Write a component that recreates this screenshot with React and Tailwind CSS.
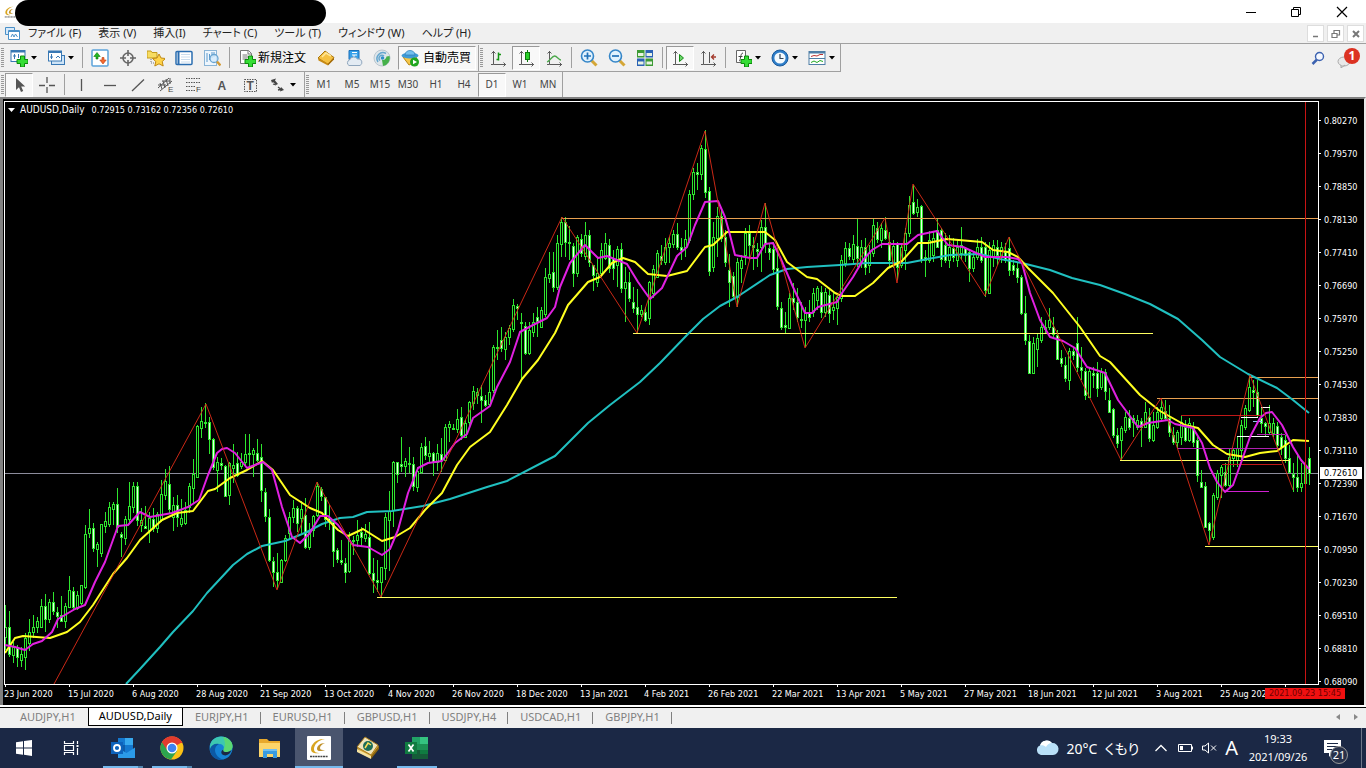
import clsx from 'clsx'

// bars are [high, open, close, low] on the vertical scale of the plot, one every 4 units
const BARS = [
  [605,637,627,650],[611,627,654,657],[642,655,647,663],[645,648,657,667],[647,660,654,667],[633,657,638,670],[619,643,632,651],[615,632,627,638],
  [617,627,621,633],[599,627,606,628],[594,606,619,632],[599,619,602,623],[592,602,611,615],[607,612,616,628],[596,615,621,622],[603,621,606,628],
  [576,607,590,607],[587,591,607,610],[591,608,595,610],[585,603,585,605],[525,587,534,589],[509,533,528,538],[523,528,548,552],[542,549,544,567],
  [524,553,524,557],[512,526,521,533],[502,524,507,527],[502,509,504,525],[488,504,527,533],[532,534,537,557],[516,538,519,545],[482,519,506,523],
  [482,507,486,513],[482,486,520,526],[508,525,520,532],[506,526,528,529],[512,530,518,543],[508,519,528,532],[512,528,514,533],[480,520,494,522],
  [469,495,481,500],[466,484,509,514],[497,517,505,531],[495,505,517,527],[499,524,518,527],[502,523,510,525],[483,507,486,513],[459,488,474,503],
  [425,477,426,477],[407,428,421,438],[403,422,423,428],[417,422,439,454],[438,439,467,470],[457,470,462,492],[458,463,465,470],[465,466,496,497],
  [462,495,463,505],[444,468,465,483],[452,463,475,477],[453,466,462,469],[434,462,454,467],[434,453,454,467],[448,454,450,477],[439,453,460,462],
  [444,457,490,502],[488,492,516,522],[509,517,560,562],[557,561,572,587],[553,572,580,589],[559,582,560,583],[535,560,538,562],[512,533,517,540],
  [500,517,508,523],[506,508,523,532],[501,518,509,533],[498,515,547,549],[523,547,532,550],[515,530,516,537],[482,515,486,517],[487,489,496,501],
  [497,497,519,527],[505,518,522,530],[520,522,551,567],[548,550,559,563],[540,560,562,565],[558,563,572,583],[532,571,540,573],[536,540,541,555],
  [520,540,535,547],[527,532,537,547],[524,538,534,542],[522,537,573,575],[558,573,580,593],[560,580,582,592],[567,582,567,597],[513,568,517,580],
  [491,520,511,571],[461,510,462,527],[462,462,474,483],[437,464,466,472],[458,466,461,477],[447,463,464,473],[457,464,486,491],[467,487,471,492],
  [443,472,447,474],[437,446,455,460],[441,456,453,463],[452,453,462,476],[444,462,453,471],[438,454,460,472],[424,460,427,461],[421,427,424,442],
  [424,428,429,430],[409,429,419,433],[407,417,435,440],[420,437,423,438],[401,422,402,428],[386,403,391,410],[388,395,392,404],[385,396,400,423],
  [395,400,405,407],[369,404,392,407],[345,390,347,393],[330,347,348,360],[327,340,348,352],[332,349,337,360],[325,337,328,345],[299,329,305,332],
  [304,306,308,320],[313,322,323,379],[322,326,353,355],[322,353,330,355],[313,332,322,337],[307,317,321,337],[307,327,310,328],[268,314,277,317],
  [252,278,274,283],[252,272,287,292],[235,287,243,290],[217,244,222,257],[217,222,242,257],[226,242,243,260],[243,246,273,287],[235,273,237,277],
  [234,239,253,257],[222,256,235,260],[230,235,262,267],[265,265,275,291],[257,282,273,287],[243,273,250,275],[233,258,243,260],[239,245,268,273],
  [250,258,268,280],[246,265,249,287],[243,249,288,293],[267,288,282,322],[272,282,298,302],[287,302,308,313],[289,307,314,333],[305,314,310,317],
  [307,312,320,322],[281,318,282,325],[265,293,269,298],[250,277,253,278],[245,256,260,265],[238,262,247,265],[237,247,243,263],[230,244,234,248],
  [223,234,247,250],[238,247,250,260],[230,247,239,257],[190,240,194,243],[168,194,172,200],[163,172,174,190],[145,174,148,180],[130,149,192,198],
  [187,191,271,276],[222,267,237,272],[207,238,216,257],[208,216,238,242],[230,237,262,267],[254,270,282,307],[272,276,296,300],[258,297,262,307],
  [255,268,260,283],[228,255,233,265],[225,233,245,260],[237,245,247,270],[243,249,251,267],[220,247,227,272],[203,227,243,253],[244,248,252,260],
  [242,249,269,275],[248,268,306,310],[302,308,327,330],[312,325,327,334],[293,328,298,329],[283,298,302,310],[288,302,317,322],[302,319,320,328],
  [307,320,313,347],[300,313,317,322],[288,312,293,317],[286,300,288,310],[286,292,312,318],[288,312,292,317],[290,295,313,323],[293,310,307,320],
  [293,308,297,325],[255,298,260,302],[242,263,248,267],[243,248,256,260],[235,259,244,263],[218,246,258,267],[240,263,247,268],[238,247,267,275],
  [245,265,253,273],[219,253,225,257],[222,228,239,243],[223,240,228,248],[217,230,238,240],[232,242,260,267],[240,263,246,268],[242,244,267,280],
  [245,265,247,268],[228,250,233,270],[196,233,205,237],[185,202,213,215],[199,212,207,217],[205,206,260,263],[250,257,260,277],[231,260,240,263],
  [232,255,238,262],[218,230,247,248],[228,230,259,267],[233,245,260,263],[235,260,247,268],[238,248,257,262],[240,260,247,267],[227,253,245,260],
  [247,248,255,262],[250,252,268,282],[252,268,257,272],[239,257,247,260],[237,247,260,263],[242,247,290,297],[242,293,250,294],[240,257,245,267],
  [240,247,255,265],[242,257,247,263],[243,252,260,263],[237,248,270,276],[260,265,270,275],[262,268,277,283],[275,277,313,315],[296,313,340,345],
  [335,341,373,374],[337,373,343,374],[333,349,338,367],[317,340,327,343],[320,327,329,333],[308,327,320,330],[317,327,334,337],[330,335,359,360],
  [350,358,363,367],[357,365,378,382],[348,380,351,390],[347,351,355,360],[317,343,367,372],[347,367,370,380],[368,371,395,400],[367,397,371,398],
  [367,373,375,388],[362,373,388,397],[368,387,372,390],[369,372,391,400],[388,400,412,413],[408,409,435,438],[428,435,443,448],[426,440,428,460],
  [412,430,417,433],[410,418,427,430],[415,418,422,437],[415,427,420,430],[418,421,427,447],[402,427,412,428],[408,417,438,442],[412,440,425,442],
  [407,427,412,429],[398,418,407,422],[400,411,418,420],[405,418,432,437],[427,435,442,445],[430,442,432,448],[415,437,422,445],[420,427,440,442],
  [418,440,423,442],[422,428,442,447],[437,440,475,482],[470,482,487,488],[482,486,527,528],[522,523,530,542],[493,537,495,540],[470,497,473,500],
  [465,475,467,498],[463,472,485,487],[448,485,457,487],[448,458,450,467],[437,460,448,467],[420,450,425,462],[405,427,408,430],[374,410,387,412],
  [380,390,392,407],[380,392,415,417],[407,418,423,433],[422,423,426,437],[405,432,423,435],[418,433,423,437],[422,426,445,450],[433,437,447,455],
  [435,440,458,463],[445,458,472,473],[463,474,477,492],[455,477,487,492],[463,487,483,492],[455,483,465,484],[447,458,473,485],
]

const FAST = '5,645 15,647 25,650 33,644 42,641 52,632 58,619 75,609 85,605 95,582 105,562 118,526 128,525 140,512 150,517 172,513 188,507 199,500 208,475 217,453 222,449 227,448 235,453 247,468 263,462 272,470 282,507 292,537 300,543 310,533 320,516 328,516 338,525 353,545 368,547 382,555 390,549 398,530 408,493 418,468 428,463 442,461 455,443 467,434 473,418 490,406 497,387 510,362 520,332 533,325 547,318 555,307 560,287 570,263 585,245 598,258 607,256 627,264 638,282 650,299 662,288 677,256 687,247 695,225 705,202 718,201 725,217 730,235 735,255 750,258 757,258 765,244 773,243 780,257 793,287 805,313 812,313 818,307 837,302 842,293 853,277 863,260 872,250 882,244 907,244 918,235 937,231 948,245 963,247 985,257 1007,257 1018,259 1022,263 1030,293 1040,320 1050,337 1063,341 1075,348 1087,367 1105,373 1118,400 1138,427 1148,423 1168,420 1175,424 1193,428 1202,443 1210,468 1217,482 1225,492 1233,485 1242,460 1250,437 1260,418 1266,413 1272,412 1282,425 1293,447 1301,460 1309,469'
const MID = '5,653 15,638 23,636 50,638 67,632 80,622 93,605 113,574 127,558 140,540 162,520 177,513 193,511 208,491 215,489 230,478 247,470 262,461 273,470 290,495 310,508 322,513 328,520 338,530 348,536 363,529 382,541 395,537 410,528 425,510 442,493 457,465 470,447 490,432 507,405 522,379 538,360 555,333 568,305 588,282 600,277 612,263 623,258 635,262 648,274 667,276 687,271 705,247 713,245 727,232 765,232 775,240 787,262 807,277 817,279 835,293 842,296 855,296 873,283 888,268 902,261 918,243 928,243 947,239 982,242 993,250 1008,252 1018,257 1028,268 1053,293 1080,327 1100,356 1110,362 1140,395 1160,411 1185,425 1198,428 1213,445 1227,454 1245,457 1260,453 1277,451 1293,440 1309,441'
const SLOW = '126,684 140,669 160,647 173,632 193,611 207,593 233,565 247,554 262,546 285,541 307,532 322,524 340,518 353,517 367,512 392,511 423,506 450,499 487,487 507,481 555,456 588,423 610,405 640,382 660,363 687,335 703,319 720,306 737,297 770,275 787,269 807,267 840,265 867,263 907,263 933,258 950,255 980,254 1000,259 1022,263 1050,270 1072,278 1100,285 1125,294 1150,304 1178,319 1202,340 1220,357 1248,374 1277,388 1293,400 1309,413'
const ZIGZAG = '54,684 206,404 277,590 317,482 381,597 562,217 637,333 705,131 737,307 765,203 805,348 885,218 897,283 913,184 985,296 1009,237 1121,460 1161,398 1209,545 1250,375 1293,490'

const LEVELS = [
  { y: 218, from: 562, to: 1318, color: '#e8a050' },
  { y: 333, from: 633, to: 1153, color: '#ffff60' },
  { y: 597, from: 377, to: 897, color: '#ffff60' },
  { y: 377, from: 1249, to: 1318, color: '#e8a050' },
  { y: 398, from: 1157, to: 1318, color: '#e8a050' },
  { y: 415, from: 1181, to: 1261, color: '#c01818' },
  { y: 407, from: 1261, to: 1270, color: '#ffffff' },
  { y: 417, from: 1241, to: 1258, color: '#ffffff' },
  { y: 421, from: 1253, to: 1262, color: '#8cc8f0' },
  { y: 436, from: 1237, to: 1269, color: '#ffffff' },
  { y: 434, from: 1257, to: 1285, color: '#b020b0' },
  { y: 448, from: 1177, to: 1280, color: '#b020b0' },
  { y: 460, from: 1120, to: 1290, color: '#ffff60' },
  { y: 464, from: 1222, to: 1282, color: '#c01818' },
  { y: 491, from: 1225, to: 1269, color: '#d020d0' },
  { y: 546, from: 1205, to: 1318, color: '#ffff60' },
]

const PRICES = ['0.80270', '0.79570', '0.78850', '0.78130', '0.77410', '0.76690', '0.75970', '0.75250', '0.74530', '0.73830', '0.73110', '0.72390', '0.71670', '0.70950', '0.70230', '0.69510', '0.68810', '0.68090']
const DATES = ['23 Jun 2020', '15 Jul 2020', '6 Aug 2020', '28 Aug 2020', '21 Sep 2020', '13 Oct 2020', '4 Nov 2020', '26 Nov 2020', '18 Dec 2020', '13 Jan 2021', '4 Feb 2021', '26 Feb 2021', '22 Mar 2021', '13 Apr 2021', '5 May 2021', '27 May 2021', '18 Jun 2021', '12 Jul 2021', '3 Aug 2021', '25 Aug 2021', '']
const MENUS = ['ファイル (F)', '表示 (V)', '挿入(I)', 'チャート (C)', 'ツール (T)', 'ウィンドウ (W)', 'ヘルプ (H)']
const FRAMES = ['M1', 'M5', 'M15', 'M30', 'H1', 'H4', 'D1', 'W1', 'MN']
const TABS = ['AUDJPY,H1', 'AUDUSD,Daily', 'EURJPY,H1', 'EURUSD,H1', 'GBPUSD,H1', 'USDJPY,H4', 'USDCAD,H1', 'GBPJPY,H1']

const plus = <path d="M10.500 7h4v3.500H18v4h-3.500V18h-4v-3.500H7v-4h3.500z" fill="#35dd35" stroke="#0c8a0c" />
const axes = <path d="M4.500 2v13.500H17M2.500 4.500l2-2 2 2M14.500 13.500l2 2-2 2M4.500 15.500H2" fill="none" stroke="#5a5a5a" />

const ICONS = {
  newChart: <><rect x="1" y="1.500" width="14" height="11" fill="#fff" stroke="#3878b4" /><path d="M1 2.500h14" stroke="#3878b4" strokeWidth="2" /><path d="M4.500 5v5M3 7h3M8.500 5v4" stroke="#3878b4" />{plus}</>,
  profiles: <><rect x="4.500" y="6.500" width="13" height="9" fill="#cfe4f7" stroke="#3878b4" /><rect x="1.500" y="2" width="13" height="10" fill="#fff" stroke="#3878b4" /><path d="M1.500 3h13" stroke="#3878b4" strokeWidth="2" /><path d="M4.500 5v5M3 8h3M9 9l2-2 2 2" fill="none" stroke="#3878b4" /></>,
  market: <><rect x="1" y="1" width="16" height="16" rx="1" fill="#fff" stroke="#5ba3da" strokeWidth="1.500" /><path d="M6 3.500L2.800 7.500H5V10h2V7.500h2.200z" fill="#22b822" stroke="#0c7a0c" strokeWidth=".6" /><path d="M12 15l-3.200-4H11V8.500h2V11h2.200z" fill="#f56a30" stroke="#b83c10" strokeWidth=".6" /></>,
  target: <g fill="none" stroke="#666" strokeWidth="1.600"><circle cx="9" cy="9" r="5" /><path d="M9 1v6M9 11v6M1 9h6M11 9h6" /></g>,
  navigator: <><path d="M0 2h4l1 1.500h5V9H0z" fill="#f7dc61" stroke="#c39a1d" /><path d="M4 10v4h5" stroke="#777" strokeDasharray="1 1" fill="none" /><path d="M12 5l2 4 4.500.5-3.300 3 1 4.500-4.200-2.200L7.800 17l1-4.500-3.300-3L10 9z" fill="#ffd44a" stroke="#c18a13" /></>,
  terminal: <><rect x="1" y="2.500" width="16" height="13" rx="1" fill="#fff" stroke="#2a6db0" strokeWidth="1.500" /><path d="M3.500 3v12" stroke="#2a6db0" strokeWidth="2" /><path d="M6 5.500h9M6 8h9M6 10.500h9M6 13h9" stroke="#c9dcee" /></>,
  tester: <><rect x="1.500" y="1.500" width="12" height="15" fill="#eef6fd" stroke="#8ab4d6" /><path d="M4 4v9M6.500 5v6M9 3v6M11 3v5" stroke="#5c9acc" /><circle cx="11" cy="9.500" r="4" fill="#d4ebfb" fillOpacity=".8" stroke="#6aa5d2" strokeWidth="1.300" /><path d="M14 12.500l3.500 4" stroke="#d39a35" strokeWidth="2.500" /></>,
  order: <><path d="M2.500 1.500h8l3 3v10h-11z" fill="#fff" stroke="#777" /><path d="M10 1.500V5h3.500" fill="none" stroke="#777" /><path d="M4.500 6h5M4.500 8h7M4.500 10h5" stroke="#777" />{plus}</>,
  gold: <><path d="M1 9l7-7 9 6.500-6 7z" fill="#f5c142" stroke="#a8740c" /><path d="M1 9l10 5.500v2L1.500 11.500z" fill="#c88a14" /><path d="M11 14.500l6-6v2L11 16.500z" fill="#a56b08" /><path d="M5 8l4-4 5 3" stroke="#ffe79a" strokeWidth="1.500" fill="none" /></>,
  server: <><path d="M4 1.500h10v9H4z" fill="#36a0ea" stroke="#1a6fb8" /><path d="M7 3.500h5M7 6h5M9 6v4" stroke="#fff" /><path d="M4 16.500a3 3 0 01.5-5.500 4.500 4.500 0 018-1 3.500 3.500 0 012.500 6.500z" fill="#e3ebf3" stroke="#8fa6bd" /></>,
  signal: <><circle cx="9" cy="9" r="8" fill="#dfe6ea" stroke="#b9c6cf" /><path d="M5 13a6 6 0 018-8.500M7 11.500a3 3 0 014-4.500" fill="none" stroke="#65a7cf" strokeWidth="1.500" /><path d="M9 11l1 6A8 8 0 0016.500 7l-3 .5A4 4 0 019 11z" fill="#46b14a" /><circle cx="9.500" cy="9" r="1.800" fill="#2f8ec9" /></>,
  auto: <><path d="M2 8l6 8 8-4-1-5z" fill="#f5c649" stroke="#b68714" /><ellipse cx="9" cy="6.500" rx="8.500" ry="3" fill="#3f9ad6" /><path d="M4 6c0-6 10-6 10 0z" fill="#74bfee" stroke="#2a7db8" strokeWidth=".7" /><circle cx="13.500" cy="13" r="4.500" fill="#1fa61f" /><path d="M12 10.700l4 2.300-4 2.300z" fill="#fff" /></>,
  bars: <>{axes}<path d="M9.500 3.500v8M7.500 10.500h2M9.500 5.500h2.500" stroke="#159415" strokeWidth="1.500" fill="none" /></>,
  candle: <>{axes}<path d="M10.500 1v12" stroke="#0b7a0b" /><rect x="8.500" y="3.500" width="4" height="7" fill="#29d029" stroke="#0b7a0b" /></>,
  line: <>{axes}<path d="M2 13c3-1 5-6 7.500-6S14 11 16 11" stroke="#4ca84c" strokeWidth="1.300" fill="none" /></>,
  zoomIn: <><path d="M11 11l5.500 5.500" stroke="#d4a636" strokeWidth="3" /><circle cx="7.500" cy="7" r="6" fill="#e1f2fd" stroke="#3586c8" strokeWidth="1.600" /><path d="M4 7h7M7.500 3.500v7" stroke="#2272b8" strokeWidth="1.700" /></>,
  zoomOut: <><path d="M11 11l5.500 5.500" stroke="#d4a636" strokeWidth="3" /><circle cx="7.500" cy="7" r="6" fill="#e1f2fd" stroke="#3586c8" strokeWidth="1.600" /><path d="M4 7h7" stroke="#2272b8" strokeWidth="1.700" /></>,
  tile: <><path d="M1 1h7.500v7.500H1zM9.500 9.500H17V17H9.500z" fill="#3c9b35" /><path d="M9.500 1H17v7.500H9.500zM1 9.500h7.500V17H1z" fill="#2a62b5" /><path d="M2 4h5.500v3H2zM10.500 4H16v3h-5.500zM2 12.500h5.500v3H2zM10.500 12.500H16v3h-5.500z" fill="#e9f3e4" /></>,
  scroll: <>{axes}<path d="M8.500 5.500v7l4-3.500z" fill="#6bd66b" stroke="#138a13" /></>,
  shift: <>{axes}<path d="M10.500 3v11" stroke="#555" /><path d="M17 8h-4M15 5.500L12.500 8l2.500 2.500" stroke="#a33a2c" fill="none" strokeWidth="1.300" /></>,
  indicator: <><path d="M2.500 1.500h9v12h-9z" fill="#fff" stroke="#666" /><path d="M5 12c2 0 1-8 4-8M4.500 7.500h4" fill="none" stroke="#444" />{plus}</>,
  clock: <><circle cx="9" cy="9" r="8" fill="#2e7ec9" stroke="#1a5a9c" /><circle cx="9" cy="9" r="5.600" fill="#f4fafe" /><path d="M9 5v4.500h3.500" stroke="#345" fill="none" strokeWidth="1.200" /></>,
  template: <><rect x="1" y="2.500" width="16" height="13" fill="#fff" stroke="#4f7ea6" /><path d="M1 3.500h16" stroke="#4f7ea6" strokeWidth="2" /><path d="M1 9.500h16" stroke="#4f7ea6" /><path d="M3 7.500l3-1 3 .5 3-1.500 3 0" stroke="#b33" fill="none" /><path d="M3 13.500l3-1.500 3 1.500 3-2 3 1" stroke="#2a2" fill="none" /></>,
  cursor: <path d="M6 2v12l3-2.800 2 4.800 2.200-1-2-4.500h4z" fill="#555" />,
  cross: <path d="M9 1v6M9 11v6M1 9.500h6M11 9.500h6" stroke="#555" strokeWidth="1.300" />,
  vline: <path d="M8.500 3v12" stroke="#555" strokeWidth="1.300" />,
  hline: <path d="M3 9.500h12" stroke="#555" strokeWidth="1.300" />,
  trend: <path d="M3 15L15 3.500" stroke="#555" strokeWidth="1.300" />,
  channel: <><path d="M1 12L12 2M3 15L15 5M3 7l2 6M6 5l2 7M9 3l2 7M13 2l0 6M1 9h8M5 5h8" stroke="#555" fill="none" /><text x="11" y="16" fontSize="8" fill="#444" fontFamily="Liberation Sans, sans-serif">E</text></>,
  fibo: <><path d="M1 2.500h14M1 6.500h14M1 10.500h9M1 14.500h9" stroke="#555" strokeDasharray="1.500 1" /><text x="11" y="16" fontSize="8" fill="#444" fontFamily="Liberation Sans, sans-serif">F</text></>,
  text: <text x="4.500" y="14" fontSize="12" fontWeight="bold" fill="#555" fontFamily="Liberation Sans, sans-serif">A</text>,
  label: <><rect x="3.500" y="3.500" width="12" height="12" fill="none" stroke="#555" strokeDasharray="1.500 1" /><text x="5.500" y="14" fontSize="12" fontWeight="bold" fill="#555" fontFamily="Liberation Sans, sans-serif">T</text></>,
  arrows: <><path d="M2 4l5-1.500-1 2L9 8 7 9 4 6 3 7z" fill="#444" /><path d="M4 8l3 1M9 11l4 3M9 14l4-1" stroke="#444" strokeWidth="1.300" /><path d="M12 11l3 3-4 1.500z" fill="#444" /></>,
}

const TRADE_TOOLS = ['market', 'target', 'navigator', 'terminal', 'tester']
const DRAW_TOOLS = ['vline', 'hline', 'trend', 'channel', 'fibo', 'text', 'label']

function Icon({ name }) {
  return (
    <svg viewBox="0 0 18 18" className="size-[18px] shrink-0" aria-hidden="true">
      {ICONS[name]}
    </svg>
  )
}

function Tool({ name, active }) {
  return (
    <button
      aria-label={name}
      className={clsx(
        'flex h-6 w-7 shrink-0 items-center justify-center border',
        active ? 'border-t-[#999] border-l-[#999] border-r-white border-b-white bg-[#f8f8f8]' : 'border-transparent'
      )}
    >
      <Icon name={name} />
    </button>
  )
}

function DropTool({ name }) {
  return (
    <button aria-label={name} className="flex h-6 w-[37px] shrink-0 items-center gap-[3px] pl-[5px]">
      <Icon name={name} />
      <svg viewBox="0 0 6 4" className="h-1 w-[6px]" aria-hidden="true"><path d="M0 0h6L3 3.500z" fill="#000" /></svg>
    </button>
  )
}

function Separator() {
  return <div className="mx-[3px] h-[21px] w-px shrink-0 bg-[#a0a0a0]" />
}

function Grip() {
  return <div className="mx-px h-[19px] w-[3px] shrink-0 bg-[repeating-linear-gradient(to_bottom,#999_0_1px,#f0f0f0_1px_2px)]" />
}

function TitleBar() {
  return (
    <header className="relative flex h-[23px] shrink-0 items-center justify-between bg-white pl-[3px]">
      <BrokerLogo className="size-[14px]" />
      <div className="absolute top-0 left-[15px] z-10 h-[26px] w-[311px] rounded-full bg-black" />
      <div className="flex">
        <button aria-label="minimize" className="flex w-[45px] justify-center">
          <svg viewBox="0 0 12 12" className="size-3"><path d="M1 6.500h10" stroke="#000" /></svg>
        </button>
        <button aria-label="restore" className="flex w-[45px] justify-center">
          <svg viewBox="0 0 12 12" className="size-3"><path d="M1.500 3.500h7v7h-7zM3.500 3.500v-2h7v7h-2" fill="none" stroke="#000" /></svg>
        </button>
        <button aria-label="close" className="flex w-12 justify-center">
          <svg viewBox="0 0 12 12" className="size-3"><path d="M1 1l10 10M11 1L1 11" stroke="#000" strokeWidth="1.200" /></svg>
        </button>
      </div>
    </header>
  )
}

function MenuBar() {
  return (
    <nav className="flex h-[21px] shrink-0 items-center border-b border-[#a0a0a0] pl-[5px]">
      <svg viewBox="0 0 15 14" className="h-[14px] w-[15px]" aria-hidden="true">
        <path d="M.5 1.500h9v7h-9z" fill="#d8eafa" stroke="#4a90c8" />
        <path d="M3.500 4.500h11v9h-11z" fill="#fff" stroke="#4a90c8" />
        <path d="M3.500 5.500h11M6 11l1.500-3L9 11l1.500-3 2 3" fill="none" stroke="#4a90c8" />
      </svg>
      <div className="flex gap-[17px] pl-2 text-[11px] text-[#222] [font-feature-settings:'palt']">
        {MENUS.map((menu) => (
          <button key={menu} className="whitespace-nowrap">{menu}</button>
        ))}
      </div>
      <div className="ml-auto flex gap-[3px] pr-[2px]">
        <button aria-label="minimize chart" className="size-[17px] border border-[#ddd] bg-white">
          <svg viewBox="0 0 15 15"><path d="M5 10.500h5" stroke="#777" strokeWidth="1.500" /></svg>
        </button>
        <button aria-label="restore chart" className="size-[17px] border border-[#ddd] bg-white">
          <svg viewBox="0 0 15 15"><path d="M4 7.500h5v4H4zM6 7V4.500h5.500V9H9" fill="none" stroke="#777" strokeWidth="1.200" /></svg>
        </button>
        <button aria-label="close chart" className="size-[17px] border border-[#ddd] bg-white">
          <svg viewBox="0 0 15 15"><path d="M5 5l6 6M11 5l-6 6" stroke="#777" strokeWidth="2" /></svg>
        </button>
      </div>
    </nav>
  )
}

function Toolbars() {
  return (
    <div className="relative h-[53px] shrink-0">
      <div className="flex h-[28px] w-fit items-center border-r border-b border-[#a0a0a0]">
        <Grip />
        <DropTool name="newChart" />
        <DropTool name="profiles" />
        <Separator />
        {TRADE_TOOLS.map((name) => <Tool key={name} name={name} />)}
        <Separator />
        <button className="flex h-6 w-[79px] shrink-0 items-center gap-[2px] pl-[5px] text-[12px] whitespace-nowrap">
          <Icon name="order" />
          新規注文
        </button>
        <Tool name="gold" />
        <Tool name="server" />
        <Tool name="signal" />
        <button className="ml-[2px] flex h-6 w-[78px] shrink-0 items-center gap-1 border border-t-[#999] border-r-white border-b-white border-l-[#999] bg-[#f8f8f8] pl-[2px] text-[12px] whitespace-nowrap">
          <Icon name="auto" />
          自動売買
        </button>
        <div className="ml-[2px] h-[26px] w-px bg-[#a0a0a0]" />
        <Grip />
        <Tool name="bars" />
        <Tool name="candle" active />
        <Tool name="line" />
        <Separator />
        <Tool name="zoomIn" />
        <Tool name="zoomOut" />
        <Tool name="tile" />
        <Separator />
        <Tool name="scroll" active />
        <Tool name="shift" />
        <Separator />
        <DropTool name="indicator" />
        <DropTool name="clock" />
        <DropTool name="template" />
      </div>
      <div className="flex h-[25px] w-fit items-center border-r border-[#a0a0a0]">
        <Grip />
        <Tool name="cursor" active />
        <Tool name="cross" />
        <Separator />
        {DRAW_TOOLS.map((name) => <Tool key={name} name={name} />)}
        <DropTool name="arrows" />
        <div className="ml-[3px] h-[25px] w-px bg-[#a0a0a0]" />
        <Grip />
        {FRAMES.map((frame) => (
          <button
            key={frame}
            className={clsx(
              'h-6 w-7 shrink-0 border font-[Noto_Sans,sans-serif] text-[10px] text-[#444]',
              frame === 'D1' ? 'border-t-[#999] border-r-white border-b-white border-l-[#999] bg-[#f8f8f8]' : 'border-transparent'
            )}
          >
            {frame}
          </button>
        ))}
      </div>
      <div className="absolute top-1 right-[6px] flex items-center gap-3">
        <button aria-label="search">
          <svg viewBox="0 0 14 14" className="size-[14px]"><path d="M6 8.500L1.500 13" stroke="#3c62b0" strokeWidth="2.500" /><circle cx="8.500" cy="5.500" r="4" fill="#f4f8ff" stroke="#3c62b0" strokeWidth="1.400" /></svg>
        </button>
        <button aria-label="notifications" className="relative h-5 w-[23px]">
          <svg viewBox="0 0 23 20" className="h-5 w-[23px]"><ellipse cx="7" cy="13.500" rx="6" ry="4.500" fill="#e8e8e8" stroke="#aaa" /><path d="M4 17v3l4-3" fill="#ccc" stroke="#aaa" /><circle cx="15" cy="8" r="8" fill="#dc3222" /></svg>
          <span className="absolute top-0 right-0 w-4 text-center text-[12px] leading-4 font-bold text-white">1</span>
        </button>
      </div>
    </div>
  )
}

function Plot() {
  return (
    <svg viewBox="4 101 1315 584" preserveAspectRatio="none" className="absolute inset-0 h-full w-full" aria-label="AUDUSD daily chart">
      <path d="M4 473.500H1318" stroke="#8c8c9c" />
      <g shapeRendering="crispEdges" stroke="#2ee62e">
        {BARS.map(([high, open, close, low], i) => {
          const x = 5 + i * 4
          const top = Math.min(open, close)
          return (
            <g key={i}>
              <path d={`M${x + 0.5} ${high}V${low}`} />
              <rect x={x - 0.5} y={top + 0.5} width="2" height={Math.max(Math.abs(close - open), 1)} fill={close > open ? '#e8ffe8' : '#000'} />
            </g>
          )
        })}
      </g>
      <g shapeRendering="crispEdges">
        {LEVELS.map((level) => (
          <path key={`${level.y}-${level.from}`} d={`M${level.from} ${level.y + 0.5}H${level.to}`} stroke={level.color} />
        ))}
      </g>
      <g fill="none" strokeWidth="2" strokeLinejoin="round">
        <polyline points={SLOW} stroke="#20c0c0" />
        <polyline points={MID} stroke="#ffff20" />
        <polyline points={FAST} stroke="#e020e0" />
      </g>
      <polyline points={ZIGZAG} fill="none" stroke="#e02c18" strokeWidth="0.9" />
      <path d="M1305.500 102V684" stroke="#c81414" />
      <rect x="4.500" y="101.500" width="1314" height="583" fill="none" stroke="#fff" />
    </svg>
  )
}

function Chart() {
  return (
    <main className="flex min-h-0 flex-1 flex-col border-t-2 border-r-2 border-l-[3px] border-t-[#808080] border-r-[#e8e8e8] border-l-[#808080] bg-black pt-[2px] pl-px font-[DejaVu_Sans_Condensed,sans-serif] text-[9px] text-white">
      <div className="flex min-h-0 flex-1">
        <div className="relative min-w-0 flex-1">
          <Plot />
          <div className="absolute top-[3px] left-1 flex items-center gap-[5px] leading-3 whitespace-nowrap">
            <svg viewBox="0 0 7 4" className="h-1 w-[7px]" aria-hidden="true"><path d="M0 0h7L3.500 4z" fill="#fff" /></svg>
            <span className="text-[10px]">AUDUSD,Daily</span>
            <span className="pl-[2px]">0.72915 0.73162 0.72356 0.72610</span>
          </div>
        </div>
        <div className="relative flex w-[45px] shrink-0 flex-col pt-[3px]">
          {PRICES.map((price) => (
            <div key={price} className="flex h-[33px] shrink-0 items-center gap-[3px] leading-3">
              <span className="h-px w-[2px] bg-white" />
              {price}
            </div>
          ))}
          <span className="absolute top-[366px] left-px w-[42px] bg-white pl-1 leading-3 text-black">0.72610</span>
        </div>
      </div>
      <div className="flex h-5 shrink-0">
        <div className="relative flex min-w-0 flex-1">
          {DATES.map((date) => (
            <div key={date} className="w-16 shrink-0 whitespace-nowrap">
              <span className="ml-px block h-[2px] w-px bg-white" />
              <span className="block leading-[14px]">{date}</span>
            </div>
          ))}
          <span className="absolute top-[3px] right-[-26px] w-20 bg-[#f01010] text-center leading-[11px] text-[#6e0000]">2021.09.23 15:45</span>
        </div>
        <div className="w-[45px] shrink-0" />
      </div>
    </main>
  )
}

function ChartTabs() {
  return (
    <div className="flex h-[23px] shrink-0 items-start border-t-2 border-white bg-[#f0f0f0]">
      <div className="flex h-[19px] min-w-0 flex-1 border-t border-black pl-2 font-[Noto_Sans,sans-serif] text-[11px]">
        {TABS.map((tab, i) => (
          <button
            key={tab}
            className={clsx(
              'relative flex h-full items-center whitespace-nowrap',
              i === 1 ? 'border border-t-0 border-black bg-white px-[10px] text-black' : 'px-3 text-[#808080]'
            )}
          >
            {tab}
            {i > 1 && <span className="absolute top-1 right-0 h-3 w-px bg-[#808080]" />}
          </button>
        ))}
        <div className="ml-auto flex items-center gap-[14px] pr-2">
          <button aria-label="previous"><svg viewBox="0 0 4 6" className="h-[6px] w-1"><path d="M4 0v6L0 3z" fill="#888" /></svg></button>
          <button aria-label="next"><svg viewBox="0 0 4 6" className="h-[6px] w-1"><path d="M0 0v6l4-3z" fill="#888" /></svg></button>
        </div>
      </div>
    </div>
  )
}

function BrokerLogo({ className }) {
  return (
    <svg viewBox="0 0 24 24" className={className} aria-hidden="true">
      <rect width="24" height="24" rx="1" fill="#fff" />
      <path d="M18 3C10 2 4 8 4 13c0 4 4 5 9 4-4 0-6-1-6-4 0-4 4-9 11-10z" fill="#d9a520" />
      <path d="M18 7c-5 0-8 3-8 6 0 2 3 3 8 1-3 0-5 0-5-2s2-4 5-5z" fill="#c0912a" />
      <path d="M3 20.500h18" stroke="#444" strokeWidth="1.500" strokeDasharray="2 .6" />
    </svg>
  )
}

const APPS = [
  {
    name: 'Outlook', state: 'stacked',
    art: <><path d="M7 2h15v20H7z" fill="#1478cf" /><path d="M14 2h8v7h-8z" fill="#38a9ee" /><path d="M7 9h7v7H7z" fill="#0f5ca8" /><path d="M7 12l8.500 5L24 11.500V22H7z" fill="#2b9ae8" /><path d="M0 6h12v12H0z" fill="#0d62bb" /><circle cx="6" cy="12" r="3" fill="none" stroke="#fff" strokeWidth="1.800" /></>,
  },
  {
    name: 'Chrome', state: 'stacked',
    art: <><circle cx="12" cy="12" r="11.500" fill="#fbc116" /><path d="M12 12L2 6.300A11.500 11.500 0 0122 6.300z" fill="#e33b2e" /><path d="M2 6.300A11.500 11.500 0 0011 23.500L17 15l-5-3z" fill="#2da44e" /><path d="M12 7h10.500L22 6.300A11.500 11.500 0 002 6.300L7 14z" fill="#e33b2e" /><circle cx="12" cy="12" r="5.500" fill="#fff" /><circle cx="12" cy="12" r="4.300" fill="#3f83f0" /></>,
  },
  {
    name: 'Edge', state: '',
    art: <><circle cx="12" cy="12" r="11.500" fill="#1583d5" /><path d="M1 11C1 4 7 .5 12 .5c7 0 11.500 5 11.500 9.500 0 4-3 6-6.500 6-3 0-3-1.500-2.500-2.500C16 10 13 8 10 8c-4 0-7 2-9 5z" fill="#3dc8b0" /><path d="M14 1c6 1 9.500 5 9.500 9 0 4-3 6-6.500 6-3 0-3-1.500-2.500-2.500 2-3 2-8-.500-12.500z" fill="#5bd873" /><path d="M1 13c1-4 5-6 9-5-4 2-5 6-3 10s6 6 9 5c-8 3-15-2-15-10z" fill="#0c59a4" /><path d="M14.500 13.500c-.5 1-.5 2.500 2.500 2.500 2 0 4-.5 5.500-2-1 3-3 5-6 5.500-4 0-6-4-2-6z" fill="#1b2845" /></>,
  },
  {
    name: 'Explorer', state: '',
    art: <><path d="M1 3h8l2 2h11v5H1z" fill="#e8a92c" /><path d="M1 7h21v14H1z" fill="#fcd56a" /><path d="M5 13h14v9h-4v-4H9v4H5z" fill="#3a9be0" /><path d="M5 13h14v2H5z" fill="#72bff0" /></>,
  },
  { name: 'MetaTrader', state: 'active' },
  {
    name: 'MetaEditor', state: '',
    art: <><path d="M1 13l8-11 14 8-8 12z" fill="#d4a431" /><path d="M1 13l14 7v3L1 16z" fill="#f5e2a0" /><path d="M15 20l8-10v3l-8 10z" fill="#8c6510" /><path d="M1 11L9 1l13 8-7 10z" fill="#f0e5bd" stroke="#aa7c1c" /><circle cx="12" cy="10" r="5" fill="#1d6e58" /><path d="M9 12l3-5 3 2" stroke="#ffe05a" fill="none" strokeWidth="1.500" /></>,
  },
  {
    name: 'Excel', state: 'open',
    art: <><path d="M7 1h16v22H7z" fill="#1c9154" /><path d="M15 1h8v7h-8z" fill="#35c481" /><path d="M7 1h8v7H7z" fill="#21a366" /><path d="M7 14h16v9H7z" fill="#155c38" /><path d="M15 14h8v4h-8z" fill="#107c41" /><path d="M0 6h12v12H0z" fill="#107c41" /><path d="M3.500 8.500l5 7M8.500 8.500l-5 7" stroke="#fff" strokeWidth="1.700" /></>,
  },
]

function Taskbar() {
  return (
    <footer className="flex h-10 shrink-0 items-center bg-[#1b2845] font-[Noto_Sans,Noto_Sans_CJK_JP,sans-serif] text-white">
      <button aria-label="start" className="flex w-12 justify-center">
        <svg viewBox="0 0 16 16" className="size-4"><path d="M0 2.200l7-1v6.300H0zM8 1l8-1v7.500H8zM0 8.500h7v6.300l-7-1zM8 8.500h8V16l-8-1.200z" fill="#fff" /></svg>
      </button>
      <button aria-label="task view" className="flex w-[47px] justify-center">
        <svg viewBox="0 0 18 16" className="h-4 w-[18px]"><path d="M1.500 1v2.500h9V1M1.500 15v-2.500h9V15M1.500 5.500h9v5h-9zM14.500 1v3M14.500 8v7" fill="none" stroke="#fff" strokeWidth="1.200" /><path d="M13.500 5h2v2h-2z" fill="#fff" /></svg>
      </button>
      <div className="ml-1 flex gap-px">
        {APPS.map((app) => (
          <button
            key={app.name}
            aria-label={app.name}
            className={clsx('relative flex h-10 w-12 items-center justify-center', app.state === 'active' && 'bg-[#4a556e]')}
          >
            {app.art ? <svg viewBox="0 0 24 24" className="size-6">{app.art}</svg> : <BrokerLogo className="size-6" />}
            {app.state === 'active' && <span className="absolute inset-x-0 bottom-0 h-[2px] bg-[#76b9ed]" />}
            {(app.state === 'open' || app.state === 'stacked') && (
              <span className={clsx('absolute inset-x-1 bottom-0 h-[2px] bg-[#76b9ed]', app.state === 'stacked' && 'border-r-[5px] border-[#5285ae]')} />
            )}
          </button>
        ))}
      </div>
      <div className="ml-auto flex h-full items-center">
        <button className="flex items-center gap-2 text-[14px] whitespace-pre [font-feature-settings:'palt']">
          <svg viewBox="0 0 24 18" className="h-[18px] w-6" aria-hidden="true"><path d="M6 16a5 5 0 01-1-9.500A7 7 0 0117 4a5.500 5.500 0 011 12z" fill="#b9e0f8" /><path d="M5 6.500A7 7 0 0117 4c-3 0-5 2-6 4-2-2-4-2-6-1.500z" fill="#fff" /></svg>
          20°C  くもり
        </button>
        <button aria-label="hidden icons" className="ml-[15px]"><svg viewBox="0 0 14 8" className="h-2 w-[14px]"><path d="M1.500 7L7 1.500 12.500 7" fill="none" stroke="#fff" strokeWidth="1.300" /></svg></button>
        <button aria-label="battery" className="ml-[10px]"><svg viewBox="0 0 16 10" className="h-[10px] w-4"><path d="M.5 1.500h13v7H.5zM14.500 3.500v3" fill="none" stroke="#fff" /><path d="M2 3h3v4H2z" fill="#fff" /></svg></button>
        <button aria-label="muted" className="ml-2"><svg viewBox="0 0 15 12" className="h-3 w-[15px]"><path d="M.5 4h2.500L6.500 1v10L3 8H.5zM9 3.500l5 5M14 3.500l-5 5" fill="none" stroke="#fff" /></svg></button>
        <span className="ml-2 text-[20px] leading-6">A</span>
        <div className="ml-[10px] flex w-[60px] flex-col items-center text-[11px] leading-[18px] whitespace-nowrap">
          <span>19:33</span>
          <span>2021/09/26</span>
        </div>
        <button aria-label="action center" className="relative ml-4 h-8 w-7">
          <svg viewBox="0 0 17 17" className="size-[17px]"><path d="M0 0h17v13H8l-3 4v-4H0z" fill="#fff" /><path d="M3 3.500h11M3 6.500h11M3 9.500h7" stroke="#1b2845" /></svg>
          <span className="absolute right-1 bottom-0 flex size-[18px] items-center justify-center rounded-full border border-[#999] bg-[#27314a] text-[11px]">21</span>
        </button>
        <div className="ml-[9px] h-full w-px bg-[#6d7688]" />
        <div className="w-1" />
      </div>
    </footer>
  )
}

export default function App() {
  return (
    <div className="flex h-screen flex-col overflow-hidden bg-[#f0f0f0] font-[Noto_Sans,Noto_Sans_CJK_JP,sans-serif] text-black">
      <TitleBar />
      <MenuBar />
      <Toolbars />
      <Chart />
      <ChartTabs />
      <Taskbar />
    </div>
  )
}
